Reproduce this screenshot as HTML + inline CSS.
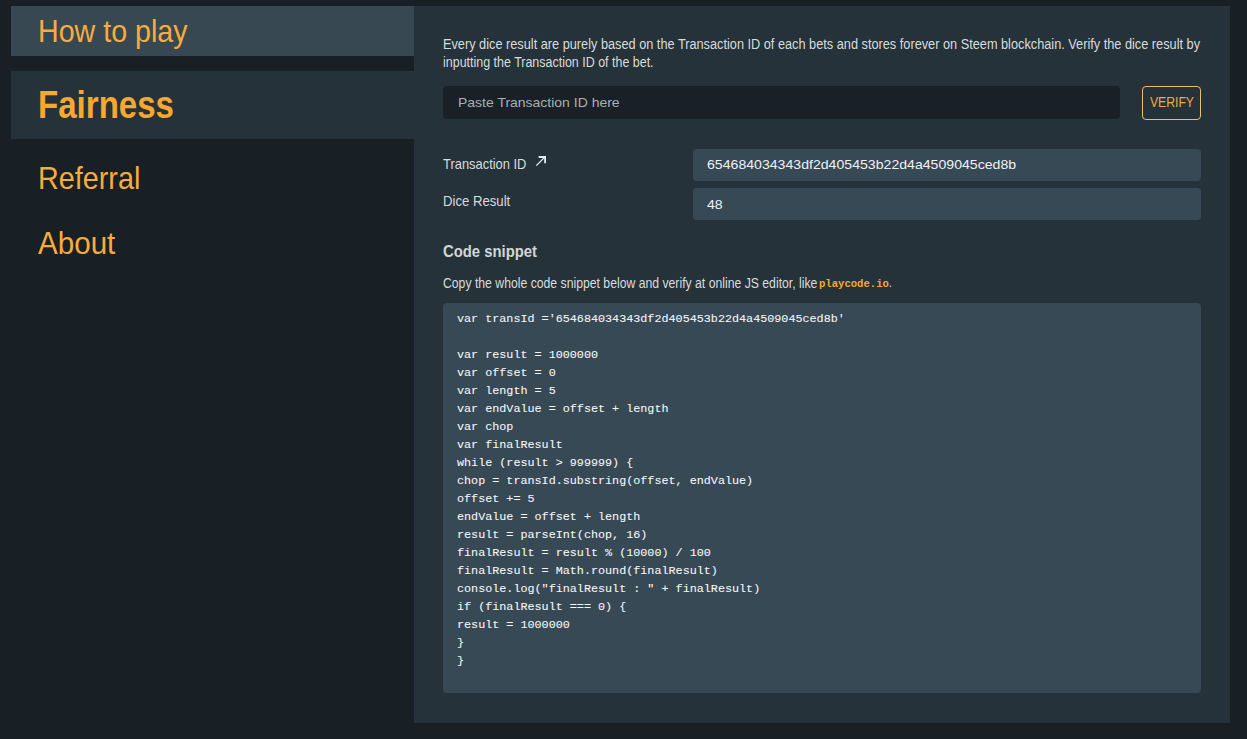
<!DOCTYPE html>
<html>
<head>
<meta charset="utf-8">
<style>
html,body{margin:0;padding:0;}
body{width:1247px;height:739px;overflow:hidden;background:#181f25;font-family:"Liberation Sans",sans-serif;position:relative;}
div,pre{position:absolute;white-space:nowrap;}
.nav{left:11px;width:403px;}
.nav1{top:6px;height:50px;background:#374852;}
.nav2{top:71px;height:68px;background:#263239;}
.navt{left:38px;color:#f7ac3e;font-size:30.5px;line-height:30px;transform-origin:0 0;}
.panel{left:414px;top:6px;width:816px;height:717px;background:#26323a;}
.p{left:443px;font-size:14px;line-height:18px;color:#d8dcdc;transform-origin:0 0;}
.inp{left:443px;top:86px;width:677px;height:33px;background:#192027;border-radius:4px;}
.ph{left:458px;top:96px;font-size:13.2px;line-height:14px;color:#a9b0b0;transform-origin:0 0;transform:scaleX(1.06);}
.btn{left:1142px;top:86px;width:57px;height:32px;border:1px solid #e9bd72;border-radius:4px;}
.btnt{left:1150px;top:95px;font-size:14px;line-height:14px;color:#eeab48;transform-origin:0 0;transform:scaleX(0.87);}
.lbl{left:443px;font-size:14.5px;line-height:14px;color:#d8dcdc;transform-origin:0 0;}
.val{left:693px;width:508px;background:#384956;border-radius:4px;}
.vt{left:707px;font-size:13.5px;line-height:14px;color:#f0f2f2;transform-origin:0 0;transform:scaleX(1.045);}
.h{left:443px;top:244px;font-size:16px;line-height:16px;font-weight:bold;color:#d2d6d6;transform-origin:0 0;transform:scaleX(0.927);}
.cp{left:443px;top:276px;font-size:14px;line-height:14px;color:#d8dcdc;transform-origin:0 0;transform:scaleX(0.873);}
.pc{left:819px;top:276px;font-family:"Liberation Mono",monospace;font-weight:bold;color:#f8a82f;font-size:11.5px;line-height:14px;transform-origin:0 0;transform:scaleX(0.92);}
.code{left:443px;top:303px;width:758px;height:390px;background:#384956;border-radius:4px;}
pre{white-space:pre;left:457px;top:310px;margin:0;font-family:"Liberation Mono",monospace;font-size:10.5px;line-height:18px;color:#f4f6f6;-webkit-text-stroke:0.08px #f4f6f6;transform-origin:0 0;transform:scaleX(1.119);}
</style>
</head>
<body>
<div class="nav nav1"></div>
<div class="navt" style="top:16px;transform:scaleX(0.938);">How to play</div>
<div class="nav nav2"></div>
<div class="navt" style="top:86px;font-size:38px;line-height:38px;font-weight:bold;color:#f8a82f;transform:scaleX(0.87);">Fairness</div>
<div class="navt" style="top:163px;transform:scaleX(0.943);">Referral</div>
<div class="navt" style="top:228px;transform:scaleX(0.97);">About</div>

<div class="panel"></div>
<div class="p" style="top:35px;transform:scaleX(0.91);">Every dice result are purely based on the Transaction ID of each bets and stores forever on Steem blockchain. Verify the dice result by</div>
<div class="p" style="top:53px;transform:scaleX(0.89);">inputting the Transaction ID of the bet.</div>
<div class="inp"></div>
<div class="ph">Paste Transaction ID here</div>
<div class="btn"></div>
<div class="btnt">VERIFY</div>

<div class="lbl" style="top:157px;transform:scaleX(0.89);">Transaction ID</div>
<svg style="position:absolute;left:534px;top:154px" width="14" height="14" viewBox="0 0 14 14"><path d="M2.3 11.6 L11 2.9" fill="none" stroke="#eef0f0" stroke-width="1.3"/><path d="M4.6 2.1 H12 V9.3 H10.2 V3.9 H4.6 Z" fill="#e6eaea"/></svg>
<div class="val" style="top:149px;height:32px;"></div>
<div class="vt" style="top:158px;">654684034343df2d405453b22d4a4509045ced8b</div>
<div class="lbl" style="top:194px;transform:scaleX(0.907);">Dice Result</div>
<div class="val" style="top:188px;height:32px;"></div>
<div class="vt" style="top:198px;">48</div>

<div class="h">Code snippet</div>
<div class="cp">Copy the whole code snippet below and verify at online JS editor, like</div>
<div class="pc">playcode.io<span style="font-family:'Liberation Sans',sans-serif;font-weight:normal;color:#d8dcdc;font-size:12.7px">.</span></div>
<div class="code"></div>
<pre>var transId ='654684034343df2d405453b22d4a4509045ced8b'

var result = 1000000
var offset = 0
var length = 5
var endValue = offset + length
var chop
var finalResult
while (result &gt; 999999) {
chop = transId.substring(offset, endValue)
offset += 5
endValue = offset + length
result = parseInt(chop, 16)
finalResult = result % (10000) / 100
finalResult = Math.round(finalResult)
console.log("finalResult : " + finalResult)
if (finalResult === 0) {
result = 1000000
}
}</pre>
</body>
</html>
